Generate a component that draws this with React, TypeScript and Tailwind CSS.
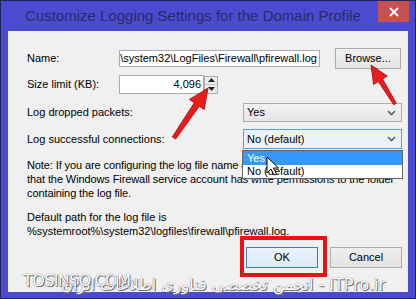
import React from "react";

const FONT = { fontFamily: '"Liberation Sans", Arial, sans-serif' };

function Chevron() {
  return (
    <svg width="9" height="6" viewBox="0 0 9 6" className="shrink-0">
      <path d="M1 1 L4.5 4.5 L8 1" fill="none" stroke="#606060" strokeWidth="1.6" />
    </svg>
  );
}

function Select({ value, focused }: { value: string; focused?: boolean }) {
  return (
    <div
      className={`flex items-center justify-between w-[159px] pl-[3px] pr-[5px] border ${
        focused
          ? "h-[20px] border-[#569de5] bg-[#eaf2fb]"
          : "h-[19px] border-[#acacac] bg-gradient-to-b from-[#f2f2f2] to-[#e6e6e6]"
      }`}
    >
      <span>{value}</span>
      <Chevron />
    </div>
  );
}

function Row({ label, children, h }: { label: string; children: React.ReactNode; h: string }) {
  return (
    <div className={`flex items-center ${h}`}>
      <div className="w-[92px] shrink-0">{label}</div>
      {children}
    </div>
  );
}

export default function App() {
  return (
    <div
      className="relative w-[416px] h-[299px] bg-[#4b4bd1] border border-[#23235a] overflow-hidden text-[11px] text-black"
      style={FONT}
    >
      {/* title bar */}
      <div className="flex items-start justify-between h-[30px]">
        <div className="pl-[24px] pt-[5px] text-[15px] text-[#2a2a62] leading-[20px]">
          Customize Logging Settings for the Domain Profile
        </div>
        <button className="w-[31px] h-[21px] mr-[6px] bg-[#c75050] flex items-center justify-center">
          <svg width="10" height="10" viewBox="0 0 10 10">
            <path d="M1 1 L9 9 M9 1 L1 9" stroke="#fff" strokeWidth="1.8" />
          </svg>
        </button>
      </div>

      {/* client area */}
      <div className="mx-[7px] h-[261px] bg-[#f0f0f0] flex flex-col pl-[19px] pr-[6px] pt-[17px]">
        <Row label="Name:" h="h-[21px]">
          <div className="w-[201px] h-[17px] border border-[#abadb3] bg-white flex justify-end items-center overflow-hidden whitespace-nowrap pr-[2px]">
            %systemroot%\system32\LogFiles\Firewall\pfirewall.log
          </div>
          <button className="ml-[15px] w-[66px] h-[21px] border border-[#acacac] bg-gradient-to-b from-[#f0f0f0] to-[#e5e5e5]">
            Browse...
          </button>
        </Row>

        <Row label="Size limit (KB):" h="h-[19px] mt-[6px]">
          <div className="w-[85px] h-[19px] border border-[#abadb3] bg-white flex items-center justify-end pr-[2px]">
            4,096
          </div>
          <div className="w-[14px] h-[18px] border border-[#acacac] flex flex-col bg-[#ececec]">
            <div className="flex-1 flex items-center justify-center border-b border-[#c8c8c8]">
              <svg width="7" height="4" viewBox="0 0 7 4">
                <path d="M0 4 L3.5 0 L7 4 Z" fill="#222" />
              </svg>
            </div>
            <div className="flex-1 flex items-center justify-center">
              <svg width="7" height="4" viewBox="0 0 7 4">
                <path d="M0 0 L3.5 4 L7 0 Z" fill="#222" />
              </svg>
            </div>
          </div>
        </Row>

        <div className="flex items-center justify-between h-[19px] mt-[9px]">
          <span>Log dropped packets:</span>
          <Select value="Yes" />
        </div>

        <div className="flex items-center justify-between h-[20px] mt-[7px]">
          <span>Log successful connections:</span>
          <Select value="No (default)" focused />
        </div>

        <div className="mt-[9px] leading-[14px] whitespace-nowrap tracking-[-0.1px]">
          Note: If you are configuring the log file name on a Group Policy object, ensure
          <br />
          that the Windows Firewall service account has write permissions to the folder
          <br />
          containing the log file.
        </div>

        <div className="mt-[10px] leading-[14px]">
          Default path for the log file is
          <br />
          %systemroot%\system32\logfiles\firewall\pfirewall.log.
        </div>

        <div className="flex justify-end gap-[12px] mt-[9px]">
          <button className="w-[72px] h-[21px] border border-[#3c7fb1] bg-gradient-to-b from-[#eaf3fc] to-[#dbeaf8]">
            OK
          </button>
          <button className="w-[72px] h-[21px] border border-[#acacac] bg-gradient-to-b from-[#efefef] to-[#e3e3e3]">
            Cancel
          </button>
        </div>
      </div>

      {/* open dropdown list */}
      <div className="absolute left-[241px] top-[149px] w-[161px] border border-[#646464] bg-white flex flex-col">
        <div className="h-[14px] leading-[14px] pl-[4px] bg-[#3399ff] text-white">Yes</div>
        <div className="h-[13px] leading-[13px] pl-[4px]">No (default)</div>
      </div>

      {/* annotation: red box around OK */}
      <div className="absolute left-[239px] top-[235px] w-[87px] h-[41px] border-[4px] border-[#ee1111]" />

      {/* annotation arrows + cursor */}
      <svg className="absolute inset-0 pointer-events-none" width="416" height="299">
        <polygon
          points="171.3,135.9 193.3,101.8 188.4,98.4 207,87 203.2,108.6 198.3,105.2 174.7,138.1"
          fill="#e81c1c"
          stroke="#b00000"
          strokeWidth="0.8"
        />
        <polygon
          points="395.3,102.2 381.5,78 386.2,75.1 370,64 372.6,83.5 377.3,80.6 392.7,103.8"
          fill="#e81c1c"
          stroke="#b00000"
          strokeWidth="0.8"
        />
        <path
          d="M266 156 L266 172 L270 168 L273 174 L275.5 173 L272.5 167 L277.5 167 Z"
          fill="#fff"
          stroke="#000"
          strokeWidth="1"
        />
      </svg>

      {/* watermark */}
      <div
        className="absolute left-[22px] top-[268px] text-[16px] text-white tracking-[-0.6px] [text-shadow:0_0_1px_#444,1px_1px_0_#777]"
        style={{ fontFamily: '"DejaVu Sans", sans-serif' }}
      >
        TOSINSO.COM
      </div>
      <div
        dir="rtl"
        className="absolute right-[30px] top-[272px] text-[16px] text-white whitespace-nowrap [text-shadow:0_0_1px_#444,1px_1px_0_#777]"
        style={{ fontFamily: '"DejaVu Sans", sans-serif' }}
      >
        ITPro.ir - انجمن تخصصی فناوری اطلاعات ایران
      </div>
    </div>
  );
}
